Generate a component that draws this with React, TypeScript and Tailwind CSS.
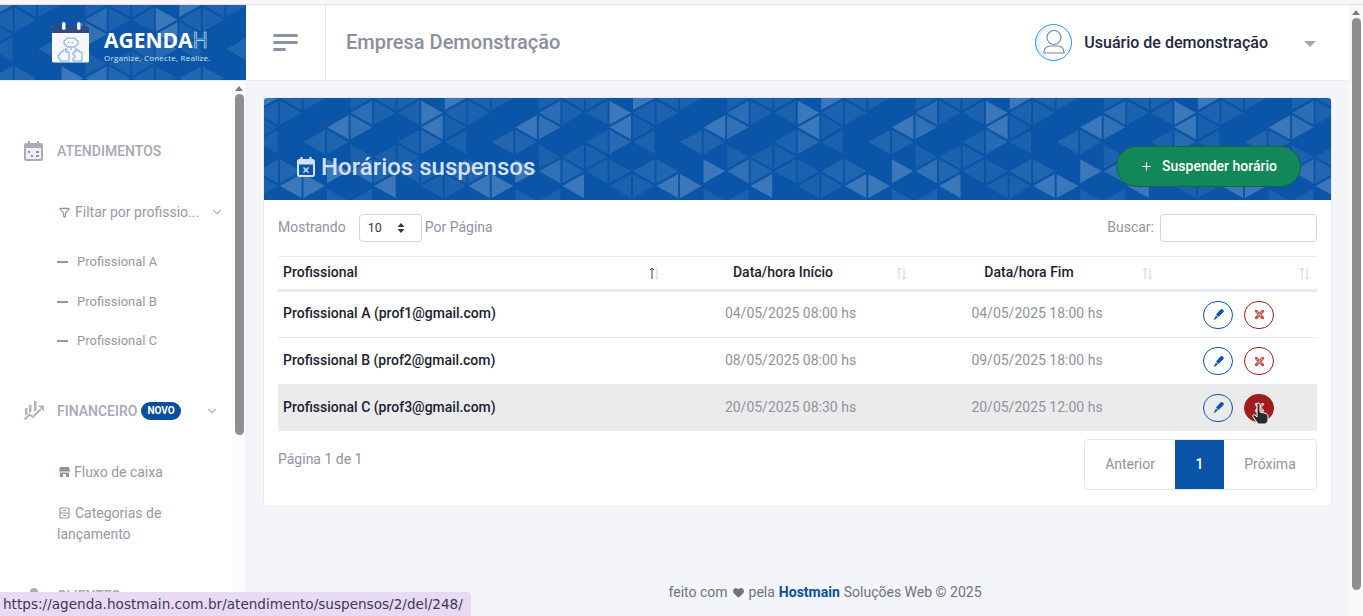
import React from 'react';
import { ChevronDown, Filter, Heart, Plus } from 'lucide-react';

const rows = [
  { name: 'Profissional A (prof1@gmail.com)', start: '04/05/2025 08:00 hs', end: '04/05/2025 18:00 hs' },
  { name: 'Profissional B (prof2@gmail.com)', start: '08/05/2025 08:00 hs', end: '09/05/2025 18:00 hs' },
  { name: 'Profissional C (prof3@gmail.com)', start: '20/05/2025 08:30 hs', end: '20/05/2025 12:00 hs' },
];

// column, half-row, direction (1 = points right), opacity of one 188px wide tile
const tile: [number, number, number, number][] = [
  [7, 1, 1, 0.25], [0, 2, -1, 0.25], [0, 0, 1, 0.2], [4, 2, -1, 0.18], [4, 2, 1, 0.15], [5, 1, -1, 0.12],
  [3, 3, -1, 0.08], [3, 3, 1, 0.07], [2, 6, -1, 0.25], [2, 6, 1, 0.25], [3, 5, 1, 0.2], [5, 5, -1, 0.14],
  [5, 5, 1, 0.08], [6, 6, -1, 0.22], [7, 3, -1, 0.06], [7, 3, 1, 0.1], [7, 5, -1, 0.06], [7, 5, 1, 0.05],
  [1, 5, -1, 0.08], [1, 5, 1, 0.08], [1, 3, -1, 0.05], [0, 6, 1, 0.05], [1, 1, 1, 0.06], [1, 1, -1, 0.06],
  [5, 1, 1, 0.05], [7, 1, -1, 0.05], [4, 4, 1, 0.05], [6, 4, -1, 0.05], [6, 4, 1, 0.05], [2, 0, 1, 0.06],
  [2, 0, -1, 0.06], [4, 0, 1, 0.05], [6, 0, -1, 0.05], [6, 0, 1, 0.05], [0, 2, 1, 0.04], [0, 6, -1, 0.05],
  [3, 7, 1, 0.05], [5, 7, -1, 0.05],
];

function TrianglePattern({ offset, repeat }: { offset: number; repeat: number }) {
  const polys: { points: string; o: number }[] = [];
  for (let k = 0; k < repeat; k++) {
    for (const [c, n, dir, o] of tile) {
      const x = offset + k * 188.3 + c * 23.54;
      const y = n * 14.67;
      polys.push({ points: `${x + dir},${y - 12} ${x + dir},${y + 12} ${x + dir * 22.5},${y}`, o });
    }
  }
  return (
    <svg className="absolute inset-0 h-full w-full" aria-hidden="true">
      {polys.map((t, i) => (
        <polygon key={i} points={t.points} fill="#ffffff" fillOpacity={Math.min(t.o + 0.02, 0.2)} />
      ))}
    </svg>
  );
}

function LogoMark() {
  return (
    <svg width="38" height="41" viewBox="0 0 38 41" fill="none" aria-hidden="true" className="shrink-0">
      <path d="M0 5.500A1.500 1.500 0 0 1 1.500 4h34A1.500 1.500 0 0 1 37 5.500V39a1.500 1.500 0 0 1-1.500 1.500h-34A1.500 1.500 0 0 1 0 39z" fill="#f5f7fb" />
      <path d="M0 11V5.500A1.500 1.500 0 0 1 1.500 4h34A1.500 1.500 0 0 1 37 5.500V11z" fill="#2e4a80" />
      <rect x="10" y="0" width="3.500" height="8" rx="1.750" fill="#f5f7fb" />
      <rect x="25" y="0" width="3.500" height="8" rx="1.750" fill="#f5f7fb" />
      <g stroke="#6aa3d6" strokeWidth="0.9" fill="none">
        <path d="M15 16h8l1 2 2 .5v4L24 23l-1 2h-8l-1-2-2-.5v-4l2-.5z" />
        <path d="M16 20.500h6" strokeDasharray="1 1" />
        <path d="M19 25v3M13 26l3 2M25 26l-3 2" />
        <path d="M8 30h3v-2h3v2h3v9H8v-3H6v-3h2z" />
        <path d="M21 30h3v-2h3v2h3v9h-9v-3h2v-3h-2z" />
      </g>
    </svg>
  );
}

function CalendarSolid() {
  return (
    <svg width="19" height="20" viewBox="0 0 19 20" aria-hidden="true" className="shrink-0">
      <path fill="#a9adb9" d="M4 0h2v2h7V0h2v2h2a2 2 0 0 1 2 2v14a2 2 0 0 1-2 2H2a2 2 0 0 1-2-2V4a2 2 0 0 1 2-2h2z" />
      <path fill="#eef0f4" d="M2 7h15v11H2z" />
      <path fill="#8d92a1" d="M4 10h2v2H4zM12 10h3v2h-3zM7 14h2v2H7zM12 14h3v2h-3z" />
    </svg>
  );
}

function ChartIcon() {
  return (
    <svg width="20" height="20" viewBox="0 0 20 20" aria-hidden="true" className="shrink-0">
      <path fill="#b0b4bf" d="M1 7h2.500v6L1 15zM5 4h2.500v6.500L5 12zM10 0h2.500v9L10 11z" />
      <path d="M0.500 18.500l5-5 3.500 2.500 8-8" fill="none" stroke="#b0b4bf" strokeWidth="2" />
      <path fill="#b0b4bf" d="M14 4.500h6v6z" />
    </svg>
  );
}

function StoreIcon() {
  return (
    <svg width="11" height="10" viewBox="0 0 11 10" aria-hidden="true" className="mr-[4px] shrink-0">
      <path fill="#8d91a0" d="M1 0h9l1 4.500H0z" />
      <path fill="#8d91a0" d="M1 5.500h9V10H7V7H4v3H1z" />
    </svg>
  );
}

function CalendarCancel() {
  return (
    <svg width="18" height="20" viewBox="0 0 18 20" fill="none" aria-hidden="true" className="shrink-0">
      <path d="M4.500 0v3M13.500 0v3" stroke="#d5e1f1" strokeWidth="2.200" />
      <rect x="1" y="3" width="16" height="16" rx="1.500" stroke="#d5e1f1" strokeWidth="2" />
      <path d="M1 4h16v3.500H1z" fill="#d5e1f1" />
      <path d="M6.500 10.500l5 5M11.500 10.500l-5 5" stroke="#d5e1f1" strokeWidth="1.500" />
    </svg>
  );
}

function PencilIcon() {
  return (
    <svg width="13" height="13" viewBox="0 0 13 13" aria-hidden="true">
      <path fill="#0a55a8" d="M8.500 1.500a1.600 1.600 0 0 1 2.300 0l.5.500a1.600 1.600 0 0 1 0 2.300L6.500 9 4 6.500z" />
      <path fill="#0a55a8" d="M4 7.500L5.800 9.300 3 11.500 1.500 12z" />
    </svg>
  );
}

function CloseIcon({ color, inner }: { color: string; inner: string }) {
  return (
    <svg width="11" height="11" viewBox="0 0 12 12" aria-hidden="true">
      <path d="M2.500 2.500l7 7M9.500 2.500l-7 7" stroke={color} strokeWidth="3.200" strokeLinecap="round" />
      <path d="M3 3l6 6M9 3L3 9" stroke={inner} strokeWidth="1.100" strokeDasharray="1.400 1.400" />
    </svg>
  );
}

function SortIcon({ active = false }: { active?: boolean }) {
  return (
    <svg width="11" height="13" viewBox="0 0 11 13" fill="none" aria-hidden="true" className="absolute right-[7px] top-1/2 -translate-y-[45%]">
      <path d="M3 12V1M1 3l2-2 2 2" stroke={active ? '#0a4f9e' : '#cfd2da'} strokeWidth="1" />
      <path d="M8 1v11M6 10l2 2 2-2" stroke="#cfd2da" strokeWidth="1" />
    </svg>
  );
}

function ScrollBar({ height, track }: { height: number; track: string }) {
  return (
    <div className={`flex h-full w-full flex-col items-center ${track}`}>
      <div className="mt-[5px] h-0 w-0 border-x-[4px] border-b-[5px] border-x-transparent border-b-[#7d7d7d]" />
      <div className="mt-[3px] w-[9px] rounded-full bg-[#8f8f8f]" style={{ height }} />
    </div>
  );
}

export default function App() {
  return (
    <div className="relative flex h-[616px] w-[1363px] flex-col overflow-hidden bg-[#f3f5f9] font-['Roboto',sans-serif] text-[14px]">
      <div className="h-[5px] shrink-0 border-b border-[#e6dfea] bg-[#fdf3fb]" />
      <div className="flex min-h-0 flex-1">
        <div className="flex min-w-0 flex-1 flex-col">
          {/* Top bar */}
          <header className="flex h-[76px] shrink-0 border-b border-[#e9ecf3] bg-white">
            <div className="relative flex w-[246px] shrink-0 items-center overflow-hidden bg-[#0a55a8] pl-[52px]">
              <TrianglePattern offset={-10} repeat={2} />
              <div className="relative flex items-start gap-[14px]">
                <LogoMark />
                <div className="mt-[7px] flex flex-col">
                  <span className="font-['Open_Sans',sans-serif] text-[21px] leading-[22px] font-bold text-white">
                    AGENDA<span className="font-normal text-transparent [-webkit-text-stroke:0.6px_#dfe8f5]">H</span>
                  </span>
                  <span className="mt-[2px] font-['Open_Sans',sans-serif] text-[8px] leading-[10px] tracking-[0.23px] text-[#d6e2f2]">Organize, Conecte, Realize.</span>
                </div>
              </div>
            </div>
            <div className="flex w-[80px] shrink-0 items-center justify-center border-r border-[#e6e9f0] pr-[1px]">
              <div className="flex w-[25px] flex-col gap-[4px]">
                <div className="h-[3px] w-[25px] rounded-sm bg-[#8e93a3]" />
                <div className="h-[3px] w-[25px] rounded-sm bg-[#8e93a3]" />
                <div className="h-[3px] w-[13px] rounded-sm bg-[#8e93a3]" />
              </div>
            </div>
            <div className="flex flex-1 items-center pl-[20px] pb-[1px] pr-[33px]">
              <span className="text-[20px] font-medium text-[#8b8f9c]">Empresa Demonstração</span>
              <div className="ml-auto flex items-center">
                <div className="flex h-[37px] w-[37px] items-center justify-center rounded-full border border-[#1f9be0] shadow-[inset_3px_0_4px_#e4e8f5]">
                  <svg width="22" height="24" viewBox="0 0 22 24" fill="none" stroke="#6d8cb0" strokeWidth="1.200" aria-hidden="true">
                    <circle cx="11" cy="7.500" r="7" />
                    <path d="M1 23v-1c0-3.500 3-6 6-6h8c3 0 6 2.500 6 6v1z" />
                  </svg>
                </div>
                <span className="mt-[1px] ml-[12px] text-[16px] font-medium text-[#22263f]">Usuário de demonstração</span>
                <div className="mt-[3px] ml-[36px] h-0 w-0 border-x-[6px] border-t-[6px] border-x-transparent border-t-[#a5a8b3]" />
              </div>
            </div>
          </header>

          <div className="flex min-h-0 flex-1">
            {/* Sidebar */}
            <aside className="flex w-[247px] shrink-0 border-r border-[#e9ecf3] bg-white">
              <nav className="min-w-0 flex-1 overflow-hidden pl-[24px] pt-[58px] text-[#9599a6]">
                <div className="flex items-center gap-[14px] text-[14px] leading-[24px] font-medium text-[#a4a8b5]">
                  <CalendarSolid />
                  <span>ATENDIMENTOS</span>
                </div>
                <div className="mt-[37px] flex items-center pl-[35px] text-[14px] leading-[24px] text-[#969aa7]">
                  <Filter size={11} strokeWidth={2.400} className="mr-[5px] shrink-0 text-[#8d91a0]" />
                  <span>Filtar por profissio...</span>
                  <ChevronDown size={14} className="ml-[11px] shrink-0 text-[#b4b7c1]" />
                </div>
                <ul className="mt-[30px] flex flex-col gap-[23.500px] pl-[33px] text-[13px] leading-[16px]">
                  {['Profissional A', 'Profissional B', 'Profissional C'].map((p) => (
                    <li key={p} className="flex items-center gap-[9px]">
                      <span className="h-[2px] w-[11px] bg-[#9599a6]" />
                      {p}
                    </li>
                  ))}
                </ul>
                <div className="mt-[50px] flex items-center text-[14px] leading-[24px] font-medium text-[#a4a8b5]">
                  <ChartIcon />
                  <span className="ml-[13px]">FINANCEIRO</span>
                  <span className="ml-[4px] rounded-full bg-[#0a4f9e] px-[6px] text-[10px] leading-[18px] font-bold text-white">NOVO</span>
                  <ChevronDown size={14} className="ml-[24px] shrink-0 text-[#b4b7c1]" />
                </div>
                <div className="mt-[39px] flex items-center pl-[35px] leading-[20px]">
                  <StoreIcon />
                  Fluxo de caixa
                </div>
                <div className="mt-[21px] pl-[33px] leading-[21px]">
                  <svg width="11" height="12" viewBox="0 0 11 12" fill="none" stroke="#9599a6" strokeWidth="1.200" aria-hidden="true" className="mr-[5px] ml-[2px] inline-block align-[-1px]">
                    <rect x="1" y="1" width="9" height="10" rx="1" />
                    <path d="M1 6h9M4 3.500h3M4 8.500h3" />
                  </svg>
                  Categorias de<br />lançamento
                </div>
                <div className="mt-[39px] flex items-center gap-[13px] text-[14px] leading-[24px] font-medium text-[#a4a8b5]">
                  <svg width="20" height="18" viewBox="0 0 20 18" aria-hidden="true" className="shrink-0">
                    <circle cx="10" cy="5" r="4" fill="#a9adb9" />
                  </svg>
                  <span>CLIENTES</span>
                </div>
              </nav>
              <div className="w-[14px] shrink-0">
                <ScrollBar height={341} track="bg-[#fbfbfb]" />
              </div>
            </aside>

            {/* Main */}
            <main className="flex min-w-0 flex-1 flex-col pl-[16px] pr-[17px] pt-[16px]">
              <section className="overflow-hidden rounded-[4px] border border-[#e6e9f0] bg-white">
                <div className="relative flex h-[102px] items-end justify-between overflow-hidden bg-[#0a55a8] pl-[33px] pr-[30px] pb-[13px]">
                  <TrianglePattern offset={-8.600} repeat={7} />
                  <h1 className="relative mb-[4px] flex items-center gap-[6px] text-[24px] leading-[32px] font-medium text-[#d5e1f1]">
                    <CalendarCancel />
                    Horários suspensos
                  </h1>
                  <button className="relative flex h-[41px] w-[185px] items-center justify-center gap-[9px] rounded-full border border-[#10683f] bg-[#12875a] text-[14px] font-medium text-white">
                    <Plus size={13} strokeWidth={2} />
                    Suspender horário
                  </button>
                </div>

                <div className="px-[14px] pt-[14px] pb-[16px]">
                  <div className="flex h-[28px] items-center text-[#8f93a1]">
                    <span className="pb-[2px]">Mostrando</span>
                    <div className="ml-[13px] flex h-[28px] w-[63px] items-center justify-between rounded-[4px] border border-[#cfd3dc] pl-[8px] pr-[12px] text-[12.500px] text-[#33364a]">
                      10
                      <svg width="16" height="12" viewBox="0 0 16 12" aria-hidden="true"><path d="M8 1l3.500 4h-7zM8 11L4.500 7h7z" fill="#33364a" /></svg>
                    </div>
                    <span className="ml-[3px] pb-[2px]">Por Página</span>
                    <span className="ml-auto pb-[2px]">Buscar:</span>
                    <div className="ml-[6px] h-[28px] w-[157px] rounded-[4px] border border-[#cfd3dc] bg-white" />
                  </div>

                  <table className="mt-[14px] w-full table-fixed border-collapse border-t border-[#e8ebf1]">
                    <colgroup>
                      <col className="w-[389px]" />
                      <col className="w-[247px]" />
                      <col className="w-[246px]" />
                      <col />
                    </colgroup>
                    <thead>
                      <tr className="h-[34px] border-b-[3px] border-[#e6e9f3] text-[#1c1e33]">
                        <th className="relative pb-[2px] pl-[5px] text-left font-medium">Profissional<SortIcon active /></th>
                        <th className="relative pb-[2px] pr-[15px] text-center font-medium">Data/hora Início<SortIcon /></th>
                        <th className="relative pb-[2px] pr-[16px] text-center font-medium">Data/hora Fim<SortIcon /></th>
                        <th className="relative"><SortIcon /></th>
                      </tr>
                    </thead>
                    <tbody>
                      {rows.map((row, i) => {
                        const hovered = i === 2;
                        const cellPad = hovered ? '' : 'pb-[2px]';
                        return (
                          <tr key={row.name} className={`border-b border-[#e8ebf1] last:border-b-0 ${hovered ? 'h-[46px] bg-[#ebebeb]' : 'h-[47px]'}`}>
                            <td className={`pl-[5px] font-medium text-[#1c1e33] ${cellPad}`}>{row.name}</td>
                            <td className={`text-center text-[#8f93a1] ${cellPad}`}>{row.start}</td>
                            <td className={`text-center text-[#8f93a1] ${cellPad}`}>{row.end}</td>
                            <td>
                              <div className="flex items-center justify-center gap-[11px]">
                                <span className="flex h-[28px] w-[30px] items-center justify-center rounded-full border border-[#0a55a8]"><PencilIcon /></span>
                                <span className={`flex h-[28px] w-[30px] items-center justify-center rounded-full border border-[#a01d1d] ${hovered ? 'bg-[#a01d1d]' : ''}`}>
                                  <CloseIcon color={hovered ? '#e8c4c4' : '#c24a3e'} inner={hovered ? '#a01d1d' : '#f3d9e4'} />
                                </span>
                              </div>
                            </td>
                          </tr>
                        );
                      })}
                    </tbody>
                  </table>

                  <div className="mt-[8px] flex items-start justify-between text-[#8f93a1]">
                    <span className="mt-[10px]">Página 1 de 1</span>
                    <div className="flex h-[51px] overflow-hidden rounded-[4px] border border-[#e3e6ed]">
                      <span className="flex w-[90px] items-center justify-center">Anterior</span>
                      <span className="flex w-[49px] items-center justify-center bg-[#0a55a8] font-medium text-white">1</span>
                      <span className="flex w-[92px] items-center justify-center">Próxima</span>
                    </div>
                  </div>
                </div>
              </section>
              <footer className="mt-auto flex justify-center pb-[13px] pl-[55px] text-[#6f7280]">
                <span className="flex items-center gap-[4px]">
                  feito com <Heart size={13} fill="#6f7280" strokeWidth={0} /> pela <b className="font-bold text-[#0a4f9e]">Hostmain</b> Soluções Web © 2025
                </span>
              </footer>
            </main>
          </div>
        </div>
        <div className="w-[14px] shrink-0">
          <ScrollBar height={572} track="bg-[#f8f8f8]" />
        </div>
      </div>

      {/* link preview */}
      <div className="absolute bottom-0 left-0 flex h-[24px] w-[471px] items-center rounded-tr-[4px] bg-[#e8daf4] pl-[3px] font-['DejaVu_Sans',sans-serif] text-[13.600px] whitespace-nowrap text-[#3a3a4a]">
        https://agenda.hostmain.com.br/atendimento/suspensos/2/del/248/
      </div>

      {/* mouse pointer */}
      <svg width="20" height="24" viewBox="0 0 20 24" aria-hidden="true" className="absolute left-[1251px] top-[402px]">
        <path d="M6 2.500a1.500 1.500 0 0 1 3 0V10l6 1.500c1.200.4 2 1.300 2 2.500v4c0 2-1.500 4-3.500 4H8.500c-1 0-1.800-.5-2.500-1.500L2 14.500c-.8-1.300 1-2.500 2-1.500l2 2z" fill="#2b2b2b" stroke="#ffffff" strokeWidth="1" />
      </svg>
    </div>
  );
}
